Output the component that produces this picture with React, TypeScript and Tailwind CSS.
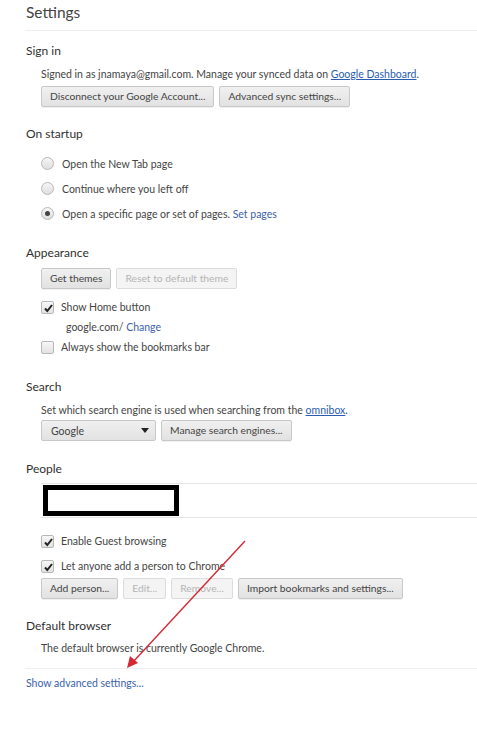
import React from 'react';

const font = { fontFamily: 'Lato, "Open Sans", Arial, sans-serif' };

const Btn = ({ children, disabled }: { children: React.ReactNode; disabled?: boolean }) => (
    <button
        type="button"
        className={
            disabled
                ? 'h-[21px] px-[8px] text-[10.3px] leading-none rounded-[2px] border border-[#dcdcdc] bg-[#f4f4f4] text-[#b4b4b4]'
                : 'h-[21px] px-[8px] text-[10.3px] leading-none rounded-[2px] border border-[#c8c8c8] bg-gradient-to-b from-[#f0f0f0] to-[#e2e2e2] text-[#444] shadow-[0_1px_0_rgba(0,0,0,0.06)]'
        }
    >
        {children}
    </button>
);

const Heading = ({ children, className = '' }: { children: React.ReactNode; className?: string }) => (
    <h3 className={`text-[12px] leading-[18px] text-[#303030] ${className}`}>{children}</h3>
);

const Radio = ({ checked, children }: { checked?: boolean; children: React.ReactNode }) => (
    <div className="h-[25px] flex items-center gap-[8px]">
        <span className="w-[13px] h-[13px] rounded-full border border-[#b8b8b8] bg-gradient-to-b from-[#f6f6f6] to-[#dedede] flex items-center justify-center">
            {checked && <span className="w-[5px] h-[5px] rounded-full bg-[#444]" />}
        </span>
        <span>{children}</span>
    </div>
);

const Check = ({ checked, children }: { checked?: boolean; children: React.ReactNode }) => (
    <div className="h-[20px] flex items-center gap-[7px]">
        <span className="relative w-[13px] h-[13px] rounded-[2px] border border-[#b8b8b8] bg-gradient-to-b from-[#f6f6f6] to-[#e2e2e2]">
            {checked && (
                <svg viewBox="0 0 13 13" className="absolute left-0 top-0 w-[13px] h-[13px]">
                    <path d="M3 6.5 L5.3 9 L10 3" fill="none" stroke="#222" strokeWidth="2" />
                </svg>
            )}
        </span>
        <span>{children}</span>
    </div>
);

export default function App() {
    return (
        <div className="relative w-[477px] h-[756px] bg-white overflow-hidden text-[10.5px] leading-[16px] text-[#444]" style={font}>
            <div className="pl-[25px]">
                {/* Header */}
                <div className="h-[31px] border-b border-[#eeeeee] flex items-center pl-[1px]">
                    <h1 className="text-[15.5px] leading-none text-[#444] -mt-[5px]">Settings</h1>
                </div>

                {/* Sign in */}
                <Heading className="mt-[11px] pl-[1px]">Sign in</Heading>
                <div className="pl-[16px]">
                    <p className="mt-[6px] whitespace-nowrap">
                        Signed in as jnamaya@gmail.com. Manage your synced data on{' '}
                        <a className="text-[#2a5db0] underline">Google Dashboard</a>.
                    </p>
                    <div className="mt-[4px] flex gap-[5px]">
                        <Btn>Disconnect your Google Account...</Btn>
                        <Btn>Advanced sync settings...</Btn>
                    </div>
                </div>

                {/* On startup */}
                <Heading className="mt-[18px] pl-[1px]">On startup</Heading>
                <div className="pl-[16px] mt-[8px]">
                    <Radio>Open the New Tab page</Radio>
                    <Radio>Continue where you left off</Radio>
                    <Radio checked>
                        Open a specific page or set of pages. <a className="text-[#3b62a8]">Set pages</a>
                    </Radio>
                </div>

                {/* Appearance */}
                <Heading className="mt-[18px] pl-[1px]">Appearance</Heading>
                <div className="pl-[16px]">
                    <div className="mt-[6px] flex gap-[5px]">
                        <Btn>Get themes</Btn>
                        <Btn disabled>Reset to default theme</Btn>
                    </div>
                    <div className="mt-[8px]">
                        <Check checked>Show Home button</Check>
                        <div className="h-[20px] flex items-center pl-[25px]">
                            google.com/&nbsp;<a className="text-[#3b62a8]">Change</a>
                        </div>
                        <Check>Always show the bookmarks bar</Check>
                    </div>
                </div>

                {/* Search */}
                <Heading className="mt-[21px] pl-[1px]">Search</Heading>
                <div className="pl-[16px]">
                    <p className="mt-[6px] whitespace-nowrap">
                        Set which search engine is used when searching from the{' '}
                        <a className="text-[#2a5db0] underline">omnibox</a>.
                    </p>
                    <div className="mt-[2px] flex gap-[5px]">
                        <div className="h-[21px] w-[115px] pl-[9px] pr-[6px] rounded-[2px] border border-[#c8c8c8] bg-gradient-to-b from-[#f0f0f0] to-[#e2e2e2] flex items-center justify-between">
                            <span>Google</span>
                            <svg viewBox="0 0 8 5" className="w-[8px] h-[5px]">
                                <path d="M0 0 H8 L4 5 Z" fill="#222" />
                            </svg>
                        </div>
                        <Btn>Manage search engines...</Btn>
                    </div>
                </div>

                {/* People */}
                <Heading className="mt-[19px] pl-[1px]">People</Heading>
                <div className="pl-[16px]">
                    <div className="mt-[5px] h-[35px] border-y border-[#e6e6e6] flex items-center pl-[2px]">
                        <div className="w-[136px] h-[31px] border-[5px] border-black bg-white" />
                    </div>
                    <div className="mt-[13px] flex flex-col gap-[5px]">
                        <Check checked>Enable Guest browsing</Check>
                        <Check checked>Let anyone add a person to Chrome</Check>
                    </div>
                    <div className="mt-[2px] flex gap-[5px]">
                        <Btn>Add person...</Btn>
                        <Btn disabled>Edit...</Btn>
                        <Btn disabled>Remove...</Btn>
                        <Btn>Import bookmarks and settings...</Btn>
                    </div>
                </div>

                {/* Default browser */}
                <Heading className="mt-[18px] pl-[1px]">Default browser</Heading>
                <div className="pl-[16px] pb-[12px] border-b border-[#eeeeee]">
                    <p className="mt-[5px]">The default browser is currently Google Chrome.</p>
                </div>
                <a className="block mt-[6px] pl-[1px] text-[#3b62a8]">Show advanced settings...</a>
            </div>

            {/* Red annotation arrow */}
            <svg className="absolute left-0 top-0 w-[477px] h-[756px] pointer-events-none" viewBox="0 0 477 756">
                <line x1="245" y1="541" x2="133" y2="662" stroke="#d42a35" strokeWidth="1.4" />
                <path d="M127 668 L130 656 L138 663 Z" fill="#d42a35" />
            </svg>
        </div>
    );
}
